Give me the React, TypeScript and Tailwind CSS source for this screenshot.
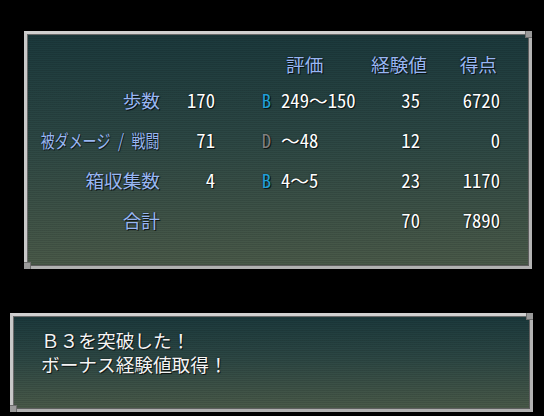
import React from 'react';

type Row = {
  label: React.ReactNode;
  count?: string;
  grade?: string;
  range?: string;
  exp: string;
  points: string;
};

const rows: Row[] = [
  { label: '歩数', count: '170', grade: 'B', range: '249～150', exp: '35', points: '6720' },
  {
    label: (
      <span className="inline-block shrink-0 origin-right scale-x-[0.75] whitespace-nowrap">被ダメージ / 戦闘</span>
    ),
    count: '71',
    grade: 'D',
    range: '～48',
    exp: '12',
    points: '0',
  },
  { label: '箱収集数', count: '4', grade: 'B', range: '4～5', exp: '23', points: '1170' },
  { label: '合計', exp: '70', points: '7890' },
];

const gradeColor: Record<string, string> = {
  B: 'text-[#20a0d6]',
  D: 'text-[#808080]',
};

const cols = 'grid grid-cols-[133px_55px_56px_100px_54px_75px]';

function Corners() {
  return (
    <>
      <div className="absolute -top-[3px] -right-[3px] w-[7px] h-[7px] bg-[#9a9a9a] border-l border-b border-[#6e6e6e]" />
      <div className="absolute -bottom-[3px] -left-[3px] w-[7px] h-[7px] bg-[#9a9a9a] border-t border-r border-[#6e6e6e]" />
    </>
  );
}

const windowBox =
  'relative border-[3px] border-t-[#d0d0d0] border-l-[#c8c8c8] border-r-[#b4b4b4] border-b-[#b0b0b0] shadow-[inset_1px_1px_0_#6a6a6a,inset_-1px_-1px_0_#5e5e5e] bg-[image:repeating-linear-gradient(180deg,rgba(0,0,0,0.10)_0px,rgba(0,0,0,0.10)_1px,transparent_1px,transparent_2px),linear-gradient(180deg,#1b393c_0%,#2c4744_45%,#4a5a49_100%)]';

export default function App() {
  return (
    <div className="w-[544px] h-[416px] bg-black overflow-hidden flex flex-col font-['Noto_Sans_Mono_CJK_JP','Noto_Sans_CJK_JP',sans-serif] text-[18.67px] leading-[24px] text-white [text-shadow:1px_1px_0_rgba(0,0,0,0.65),0_0_2px_rgba(0,0,0,0.6)]">
      {/* result window */}
      <div className={`${windowBox} ml-[24px] mt-[31px] w-[508px] h-[238px] pt-[14px]`}>
        <Corners />
        <div className={`${cols} h-[32px] items-center text-[#98b6f2]`}>
          <div />
          <div />
          <div />
          <div className="pl-[15px]">評価</div>
          <div className="text-right whitespace-nowrap">経験値</div>
          <div className="text-right pr-[3px]">得点</div>
        </div>
        {rows.map((r, i) => (
          <div key={i} className={`${cols} h-[40px] items-center`}>
            <div className="flex justify-end text-[#98b6f2] whitespace-nowrap">{r.label}</div>
            <div className="text-right">{r.count}</div>
            <div className={`text-right ${r.grade ? gradeColor[r.grade] : ''}`}>{r.grade}</div>
            <div className="pl-[10px] whitespace-nowrap">{r.range}</div>
            <div className="text-right pr-[5px]">{r.exp}</div>
            <div className="text-right">{r.points}</div>
          </div>
        ))}
      </div>

      {/* message window */}
      <div className={`${windowBox} ml-[10px] mt-[44px] w-[523px] h-[99px] pt-[12px] pl-[28px] text-[#f4f4f4]`}>
        <Corners />
        <p>Ｂ３を突破した！</p>
        <p>ボーナス経験値取得！</p>
      </div>
    </div>
  );
}
